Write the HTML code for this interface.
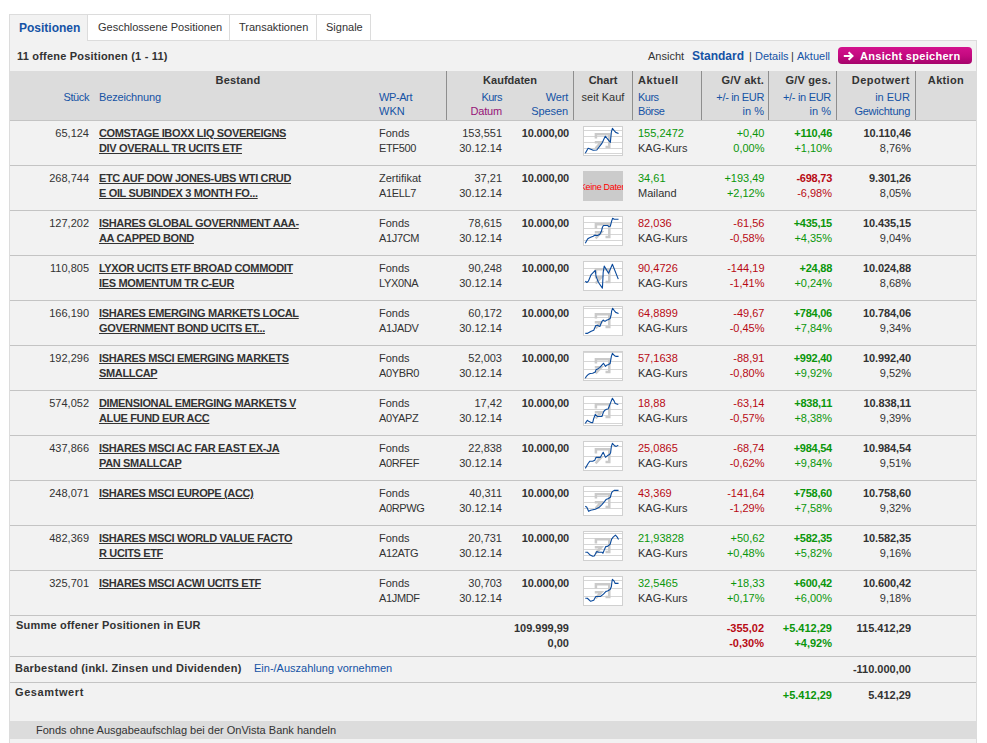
<!DOCTYPE html>
<html><head><meta charset="utf-8"><style>
html,body{margin:0;padding:0;background:#fff;width:987px;height:743px;overflow:hidden;position:relative}
body{font-family:"Liberation Sans",sans-serif;font-size:11px;color:#333}
.t{position:absolute;white-space:nowrap;line-height:15px}
.nm{font-weight:bold;text-decoration:underline;letter-spacing:-0.35px}
</style></head><body>
<div style="position:absolute;left:9px;top:14px;width:79px;height:27px;background:#f2f2f2;border:1px solid #dcdcdc;border-bottom:none;box-sizing:border-box"></div>
<div style="position:absolute;left:88px;top:14px;width:142px;height:27px;background:#fff;border:1px solid #dcdcdc;border-left:none;box-sizing:border-box"></div>
<div style="position:absolute;left:230px;top:14px;width:87px;height:27px;background:#fff;border:1px solid #dcdcdc;border-left:none;box-sizing:border-box"></div>
<div style="position:absolute;left:317px;top:14px;width:54px;height:27px;background:#fff;border:1px solid #dcdcdc;border-left:none;box-sizing:border-box"></div>
<div style="position:absolute;left:88px;top:40px;width:889px;height:1px;background:#dcdcdc"></div>
<div style="position:absolute;left:9px;top:41px;width:968px;height:702px;background:#f2f2f2;border-left:1px solid #dcdcdc;border-right:1px solid #dcdcdc;box-sizing:border-box"></div>
<div style="position:absolute;left:10px;top:40px;width:77px;height:2px;background:#f2f2f2"></div>
<div class="t" style="left:19px;top:21px;color:#1553a5;font-weight:bold;font-size:12px">Positionen</div>
<div class="t" style="left:98px;top:20px">Geschlossene Positionen</div>
<div class="t" style="left:239px;top:20px">Transaktionen</div>
<div class="t" style="left:326px;top:20px">Signale</div>
<div class="t" style="left:17px;top:49px;font-weight:bold;letter-spacing:0.2px">11 offene Positionen (1 - 11)</div>
<div class="t" style="left:648px;top:49px">Ansicht</div>
<div class="t" style="left:692px;top:49px;color:#1553a5;font-weight:bold;font-size:12px">Standard</div>
<div class="t" style="left:749px;top:49px">|</div>
<div class="t" style="left:755px;top:49px;color:#1553a5">Details</div>
<div class="t" style="left:791px;top:49px">|</div>
<div class="t" style="left:797px;top:49px;color:#1553a5">Aktuell</div>
<div style="position:absolute;left:838px;top:47px;width:134px;height:17px;border-radius:4px;background:linear-gradient(#d3128d 0%,#c40a80 50%,#a5046b 100%);"></div>
<svg style="position:absolute;left:843px;top:51px" width="12" height="10" viewBox="0 0 12 10"><path d="M0.8 5H9.5M5.6 1.2L9.5 5L5.6 8.8" stroke="#fff" stroke-width="2" fill="none"/></svg>
<div class="t" style="left:860px;top:49px;color:#fff;font-weight:bold;letter-spacing:0.3px">Ansicht speichern</div>
<div style="position:absolute;left:10px;top:71px;width:966px;height:49px;background:#dcdcdc"></div>
<div style="position:absolute;left:10px;top:120px;width:966px;height:1px;background:#c4c4c4"></div>
<div style="position:absolute;left:446px;top:71px;width:1px;height:49px;background:#8e8e8e"></div>
<div style="position:absolute;left:573px;top:71px;width:1px;height:49px;background:#8e8e8e"></div>
<div style="position:absolute;left:632px;top:71px;width:1px;height:49px;background:#8e8e8e"></div>
<div style="position:absolute;left:701px;top:71px;width:1px;height:49px;background:#8e8e8e"></div>
<div style="position:absolute;left:768px;top:71px;width:1px;height:49px;background:#8e8e8e"></div>
<div style="position:absolute;left:836px;top:71px;width:1px;height:49px;background:#8e8e8e"></div>
<div style="position:absolute;left:915px;top:71px;width:1px;height:49px;background:#8e8e8e"></div>
<div class="t" style="left:238px;width:0;text-align:center;top:73px;font-weight:bold;letter-spacing:0.24px"><span style="position:relative;display:inline-block;transform:translateX(-50%)">Bestand</span></div>
<div class="t" style="right:898px;top:90px;color:#1553a5;letter-spacing:-0.4px">Stück</div>
<div class="t" style="left:99px;top:90px;color:#1553a5;letter-spacing:-0.15px">Bezeichnung</div>
<div class="t" style="left:379px;top:90px;color:#1553a5;letter-spacing:-0.4px">WP-Art</div>
<div class="t" style="left:379px;top:104px;color:#1553a5">WKN</div>
<div class="t" style="left:510px;width:0;text-align:center;top:73px;font-weight:bold"><span style="position:relative;display:inline-block;transform:translateX(-50%)">Kaufdaten</span></div>
<div class="t" style="right:485px;top:90px;color:#1553a5;letter-spacing:-0.5px">Kurs</div>
<div class="t" style="right:485px;top:104px;color:#961478;letter-spacing:-0.2px">Datum</div>
<div class="t" style="right:419px;top:90px;color:#1553a5;letter-spacing:-0.2px">Wert</div>
<div class="t" style="right:419px;top:104px;color:#1553a5;letter-spacing:-0.1px">Spesen</div>
<div class="t" style="left:603px;width:0;text-align:center;top:73px;font-weight:bold"><span style="position:relative;display:inline-block;transform:translateX(-50%)">Chart</span></div>
<div class="t" style="left:603px;width:0;text-align:center;top:90px"><span style="position:relative;display:inline-block;transform:translateX(-50%)">seit Kauf</span></div>
<div class="t" style="left:638px;top:73px;font-weight:bold;letter-spacing:0.57px">Aktuell</div>
<div class="t" style="left:638px;top:90px;color:#1553a5;letter-spacing:-0.5px">Kurs</div>
<div class="t" style="left:638px;top:104px;color:#1553a5;letter-spacing:-0.45px">Börse</div>
<div class="t" style="right:223px;top:73px;font-weight:bold;letter-spacing:0.19px">G/V akt.</div>
<div class="t" style="right:223px;top:90px;color:#1553a5;letter-spacing:-0.34px">+/- in EUR</div>
<div class="t" style="right:223px;top:104px;color:#1553a5">in %</div>
<div class="t" style="right:156px;top:73px;font-weight:bold;letter-spacing:0.2px">G/V ges.</div>
<div class="t" style="right:156px;top:90px;color:#1553a5;letter-spacing:-0.3px">+/- in EUR</div>
<div class="t" style="right:156px;top:104px;color:#1553a5">in %</div>
<div class="t" style="right:77px;top:73px;font-weight:bold;letter-spacing:0.49px">Depotwert</div>
<div class="t" style="right:77px;top:90px;color:#1553a5">in EUR</div>
<div class="t" style="right:77px;top:104px;color:#1553a5;letter-spacing:-0.25px">Gewichtung</div>
<div class="t" style="left:946px;width:0;text-align:center;top:73px;font-weight:bold;letter-spacing:0.35px"><span style="position:relative;display:inline-block;transform:translateX(-50%)">Aktion</span></div>
<div class="t" style="right:898px;top:126px">65,124</div>
<div class="t nm" style="left:99px;top:126px">COMSTAGE IBOXX LIQ SOVEREIGNS</div>
<div class="t nm" style="left:99px;top:141px">DIV OVERALL TR UCITS ETF</div>
<div class="t" style="left:379px;top:126px">Fonds</div>
<div class="t" style="left:379px;top:141px;letter-spacing:-0.35px">ETF500</div>
<div class="t" style="right:485px;top:126px">153,551</div>
<div class="t" style="right:485px;top:141px">30.12.14</div>
<div class="t" style="right:418px;top:126px;font-weight:bold;letter-spacing:-0.2px">10.000,00</div>
<svg style="position:absolute;left:583px;top:126px" width="40" height="30" viewBox="0 0 40 30"><rect x="0.5" y="0.5" width="39" height="29" fill="#fff" stroke="#d0d0d0"/><path d="M1 4.5H39" stroke="#d6d6d6" stroke-width="1"/><path d="M1 10.5H39" stroke="#d6d6d6" stroke-width="1"/><path d="M1 16.5H39" stroke="#d6d6d6" stroke-width="1"/><path d="M1 22.5H39" stroke="#d6d6d6" stroke-width="1"/><path d="M1 27.5H39" stroke="#d6d6d6" stroke-width="1"/><path d="M12.9 12.5V8.2H26.3V22.3M22.5 21.1H27.5M11.8 16.2H18.3L12.6 22.3" stroke="#cacaca" stroke-width="2.5" fill="none"/><path d="M2.3 27.35 L5.11 22.24 L7.16 23.01 L10.22 24.28 L13.8 24.03 L18.92 17.38 L22.24 10.22 L27.35 16.36 L28.37 6.13 L29.4 2.3 L31.19 4.6 L32.72 6.39 L35.53 7.41" stroke="#0a4a9c" stroke-width="1.1" fill="none" stroke-linejoin="round"/></svg>
<div class="t" style="left:638px;top:126px;color:#0a960a">155,2472</div>
<div class="t" style="left:638px;top:141px">KAG-Kurs</div>
<div class="t" style="right:222.5px;top:126px;color:#0a960a">+0,40</div>
<div class="t" style="right:222.5px;top:141px;color:#0a960a">0,00%</div>
<div class="t" style="right:155px;top:126px;color:#0a960a;font-weight:bold;letter-spacing:-0.25px">+110,46</div>
<div class="t" style="right:155px;top:141px;color:#0a960a">+1,10%</div>
<div class="t" style="right:76px;top:126px;font-weight:bold;letter-spacing:-0.1px">10.110,46</div>
<div class="t" style="right:76px;top:141px">8,76%</div>
<div style="position:absolute;left:10px;top:165px;width:966px;height:1px;background:#c4c4c4"></div>
<div class="t" style="right:898px;top:171px">268,744</div>
<div class="t nm" style="left:99px;top:171px">ETC AUF DOW JONES-UBS WTI CRUD</div>
<div class="t nm" style="left:99px;top:186px">E OIL SUBINDEX 3 MONTH FO...</div>
<div class="t" style="left:379px;top:171px">Zertifikat</div>
<div class="t" style="left:379px;top:186px;letter-spacing:-0.35px">A1ELL7</div>
<div class="t" style="right:485px;top:171px">37,21</div>
<div class="t" style="right:485px;top:186px">30.12.14</div>
<div class="t" style="right:418px;top:171px;font-weight:bold;letter-spacing:-0.2px">10.000,00</div>
<div style="position:absolute;left:583px;top:171px;width:40px;height:30px;background:#cbcbcb;overflow:hidden"><div style="position:absolute;left:-10px;top:9.5px;width:60px;text-align:center;font-size:9px;line-height:12px;color:#f00;white-space:nowrap;letter-spacing:-0.3px;transform:scaleY(1.08)">Keine Daten</div></div>
<div class="t" style="left:638px;top:171px;color:#0a960a">34,61</div>
<div class="t" style="left:638px;top:186px">Mailand</div>
<div class="t" style="right:222.5px;top:171px;color:#0a960a">+193,49</div>
<div class="t" style="right:222.5px;top:186px;color:#0a960a">+2,12%</div>
<div class="t" style="right:155px;top:171px;color:#b80a14;font-weight:bold;letter-spacing:-0.25px">-698,73</div>
<div class="t" style="right:155px;top:186px;color:#b80a14">-6,98%</div>
<div class="t" style="right:76px;top:171px;font-weight:bold;letter-spacing:-0.1px">9.301,26</div>
<div class="t" style="right:76px;top:186px">8,05%</div>
<div style="position:absolute;left:10px;top:210px;width:966px;height:1px;background:#c4c4c4"></div>
<div class="t" style="right:898px;top:216px">127,202</div>
<div class="t nm" style="left:99px;top:216px">ISHARES GLOBAL GOVERNMENT AAA-</div>
<div class="t nm" style="left:99px;top:231px">AA CAPPED BOND</div>
<div class="t" style="left:379px;top:216px">Fonds</div>
<div class="t" style="left:379px;top:231px;letter-spacing:-0.35px">A1J7CM</div>
<div class="t" style="right:485px;top:216px">78,615</div>
<div class="t" style="right:485px;top:231px">30.12.14</div>
<div class="t" style="right:418px;top:216px;font-weight:bold;letter-spacing:-0.2px">10.000,00</div>
<svg style="position:absolute;left:583px;top:216px" width="40" height="30" viewBox="0 0 40 30"><rect x="0.5" y="0.5" width="39" height="29" fill="#fff" stroke="#d0d0d0"/><path d="M1 6.5H39" stroke="#d6d6d6" stroke-width="1"/><path d="M1 12.5H39" stroke="#d6d6d6" stroke-width="1"/><path d="M1 18.5H39" stroke="#d6d6d6" stroke-width="1"/><path d="M1 24.5H39" stroke="#d6d6d6" stroke-width="1"/><path d="M12.9 12.5V8.2H26.3V22.3M22.5 21.1H27.5M11.8 16.2H18.3L12.6 22.3" stroke="#cacaca" stroke-width="2.5" fill="none"/><path d="M2.3 27.35 L4.6 23.01 L5.62 22.24 L7.67 21.22 L10.22 20.19 L11.76 19.17 L14.57 19.43 L16.87 18.15 L18.4 15.34 L19.43 11.25 L20.45 9.46 L24.54 9.46 L25.56 10.48 L27.35 10.22 L28.63 5.11 L29.65 2.3 L31.19 3.32 L35.53 3.32" stroke="#0a4a9c" stroke-width="1.1" fill="none" stroke-linejoin="round"/></svg>
<div class="t" style="left:638px;top:216px;color:#b80a14">82,036</div>
<div class="t" style="left:638px;top:231px">KAG-Kurs</div>
<div class="t" style="right:222.5px;top:216px;color:#b80a14">-61,56</div>
<div class="t" style="right:222.5px;top:231px;color:#b80a14">-0,58%</div>
<div class="t" style="right:155px;top:216px;color:#0a960a;font-weight:bold;letter-spacing:-0.25px">+435,15</div>
<div class="t" style="right:155px;top:231px;color:#0a960a">+4,35%</div>
<div class="t" style="right:76px;top:216px;font-weight:bold;letter-spacing:-0.1px">10.435,15</div>
<div class="t" style="right:76px;top:231px">9,04%</div>
<div style="position:absolute;left:10px;top:255px;width:966px;height:1px;background:#c4c4c4"></div>
<div class="t" style="right:898px;top:261px">110,805</div>
<div class="t nm" style="left:99px;top:261px">LYXOR UCITS ETF BROAD COMMODIT</div>
<div class="t nm" style="left:99px;top:276px">IES MOMENTUM TR C-EUR</div>
<div class="t" style="left:379px;top:261px">Fonds</div>
<div class="t" style="left:379px;top:276px;letter-spacing:-0.35px">LYX0NA</div>
<div class="t" style="right:485px;top:261px">90,248</div>
<div class="t" style="right:485px;top:276px">30.12.14</div>
<div class="t" style="right:418px;top:261px;font-weight:bold;letter-spacing:-0.2px">10.000,00</div>
<svg style="position:absolute;left:583px;top:261px" width="40" height="30" viewBox="0 0 40 30"><rect x="0.5" y="0.5" width="39" height="29" fill="#fff" stroke="#d0d0d0"/><path d="M1 7.5H39" stroke="#d6d6d6" stroke-width="1"/><path d="M1 14.5H39" stroke="#d6d6d6" stroke-width="1"/><path d="M1 21.5H39" stroke="#d6d6d6" stroke-width="1"/><path d="M12.9 12.5V8.2H26.3V22.3M22.5 21.1H27.5M11.8 16.2H18.3L12.6 22.3" stroke="#cacaca" stroke-width="2.5" fill="none"/><path d="M2.3 20.19 L3.83 21.47 L5.37 20.19 L8.18 13.55 L12.27 9.46 L13.04 15.08 L15.34 21.22 L19.43 27.1 L20.19 11.25 L21.22 5.11 L25.56 12.27 L29.4 3.32 L35.28 18.15" stroke="#0a4a9c" stroke-width="1.1" fill="none" stroke-linejoin="round"/></svg>
<div class="t" style="left:638px;top:261px;color:#b80a14">90,4726</div>
<div class="t" style="left:638px;top:276px">KAG-Kurs</div>
<div class="t" style="right:222.5px;top:261px;color:#b80a14">-144,19</div>
<div class="t" style="right:222.5px;top:276px;color:#b80a14">-1,41%</div>
<div class="t" style="right:155px;top:261px;color:#0a960a;font-weight:bold;letter-spacing:-0.25px">+24,88</div>
<div class="t" style="right:155px;top:276px;color:#0a960a">+0,24%</div>
<div class="t" style="right:76px;top:261px;font-weight:bold;letter-spacing:-0.1px">10.024,88</div>
<div class="t" style="right:76px;top:276px">8,68%</div>
<div style="position:absolute;left:10px;top:300px;width:966px;height:1px;background:#c4c4c4"></div>
<div class="t" style="right:898px;top:306px">166,190</div>
<div class="t nm" style="left:99px;top:306px">ISHARES EMERGING MARKETS LOCAL</div>
<div class="t nm" style="left:99px;top:321px">GOVERNMENT BOND UCITS ET...</div>
<div class="t" style="left:379px;top:306px">Fonds</div>
<div class="t" style="left:379px;top:321px;letter-spacing:-0.35px">A1JADV</div>
<div class="t" style="right:485px;top:306px">60,172</div>
<div class="t" style="right:485px;top:321px">30.12.14</div>
<div class="t" style="right:418px;top:306px;font-weight:bold;letter-spacing:-0.2px">10.000,00</div>
<svg style="position:absolute;left:583px;top:306px" width="40" height="30" viewBox="0 0 40 30"><rect x="0.5" y="0.5" width="39" height="29" fill="#fff" stroke="#d0d0d0"/><path d="M1 2.5H39" stroke="#d6d6d6" stroke-width="1"/><path d="M1 11.5H39" stroke="#d6d6d6" stroke-width="1"/><path d="M1 19.5H39" stroke="#d6d6d6" stroke-width="1"/><path d="M1 29.5H39" stroke="#d6d6d6" stroke-width="1"/><path d="M12.9 12.5V8.2H26.3V22.3M22.5 21.1H27.5M11.8 16.2H18.3L12.6 22.3" stroke="#cacaca" stroke-width="2.5" fill="none"/><path d="M2.3 27.35 L4.6 27.35 L8.18 25.31 L10.74 24.28 L12.78 19.43 L14.31 19.17 L16.87 20.45 L18.92 15.34 L20.19 14.06 L21.98 15.34 L23.52 14.31 L25.56 13.55 L27.1 12.53 L28.12 9.2 L28.63 5.11 L29.65 2.3 L31.44 4.86 L32.72 6.39 L35.53 7.41" stroke="#0a4a9c" stroke-width="1.1" fill="none" stroke-linejoin="round"/></svg>
<div class="t" style="left:638px;top:306px;color:#b80a14">64,8899</div>
<div class="t" style="left:638px;top:321px">KAG-Kurs</div>
<div class="t" style="right:222.5px;top:306px;color:#b80a14">-49,67</div>
<div class="t" style="right:222.5px;top:321px;color:#b80a14">-0,45%</div>
<div class="t" style="right:155px;top:306px;color:#0a960a;font-weight:bold;letter-spacing:-0.25px">+784,06</div>
<div class="t" style="right:155px;top:321px;color:#0a960a">+7,84%</div>
<div class="t" style="right:76px;top:306px;font-weight:bold;letter-spacing:-0.1px">10.784,06</div>
<div class="t" style="right:76px;top:321px">9,34%</div>
<div style="position:absolute;left:10px;top:345px;width:966px;height:1px;background:#c4c4c4"></div>
<div class="t" style="right:898px;top:351px">192,296</div>
<div class="t nm" style="left:99px;top:351px">ISHARES MSCI EMERGING MARKETS</div>
<div class="t nm" style="left:99px;top:366px">SMALLCAP</div>
<div class="t" style="left:379px;top:351px">Fonds</div>
<div class="t" style="left:379px;top:366px;letter-spacing:-0.35px">A0YBR0</div>
<div class="t" style="right:485px;top:351px">52,003</div>
<div class="t" style="right:485px;top:366px">30.12.14</div>
<div class="t" style="right:418px;top:351px;font-weight:bold;letter-spacing:-0.2px">10.000,00</div>
<svg style="position:absolute;left:583px;top:351px" width="40" height="30" viewBox="0 0 40 30"><rect x="0.5" y="0.5" width="39" height="29" fill="#fff" stroke="#d0d0d0"/><path d="M1 1.5H39" stroke="#d6d6d6" stroke-width="1"/><path d="M1 10.5H39" stroke="#d6d6d6" stroke-width="1"/><path d="M1 18.5H39" stroke="#d6d6d6" stroke-width="1"/><path d="M1 27.5H39" stroke="#d6d6d6" stroke-width="1"/><path d="M12.9 12.5V8.2H26.3V22.3M22.5 21.1H27.5M11.8 16.2H18.3L12.6 22.3" stroke="#cacaca" stroke-width="2.5" fill="none"/><path d="M2.3 27.35 L3.58 25.05 L5.11 23.52 L7.16 22.49 L9.71 22.24 L12.27 20.96 L13.04 18.66 L15.08 17.64 L16.87 16.36 L18.4 14.57 L20.45 12.27 L22.49 15.34 L23.52 14.31 L25.56 13.55 L27.1 12.53 L28.37 5.37 L29.4 2.3 L31.7 4.86 L32.72 5.37 L35.53 5.37" stroke="#0a4a9c" stroke-width="1.1" fill="none" stroke-linejoin="round"/></svg>
<div class="t" style="left:638px;top:351px;color:#b80a14">57,1638</div>
<div class="t" style="left:638px;top:366px">KAG-Kurs</div>
<div class="t" style="right:222.5px;top:351px;color:#b80a14">-88,91</div>
<div class="t" style="right:222.5px;top:366px;color:#b80a14">-0,80%</div>
<div class="t" style="right:155px;top:351px;color:#0a960a;font-weight:bold;letter-spacing:-0.25px">+992,40</div>
<div class="t" style="right:155px;top:366px;color:#0a960a">+9,92%</div>
<div class="t" style="right:76px;top:351px;font-weight:bold;letter-spacing:-0.1px">10.992,40</div>
<div class="t" style="right:76px;top:366px">9,52%</div>
<div style="position:absolute;left:10px;top:390px;width:966px;height:1px;background:#c4c4c4"></div>
<div class="t" style="right:898px;top:396px">574,052</div>
<div class="t nm" style="left:99px;top:396px">DIMENSIONAL EMERGING MARKETS V</div>
<div class="t nm" style="left:99px;top:411px">ALUE FUND EUR ACC</div>
<div class="t" style="left:379px;top:396px">Fonds</div>
<div class="t" style="left:379px;top:411px;letter-spacing:-0.35px">A0YAPZ</div>
<div class="t" style="right:485px;top:396px">17,42</div>
<div class="t" style="right:485px;top:411px">30.12.14</div>
<div class="t" style="right:418px;top:396px;font-weight:bold;letter-spacing:-0.2px">10.000,00</div>
<svg style="position:absolute;left:583px;top:396px" width="40" height="30" viewBox="0 0 40 30"><rect x="0.5" y="0.5" width="39" height="29" fill="#fff" stroke="#d0d0d0"/><path d="M1 7.5H39" stroke="#d6d6d6" stroke-width="1"/><path d="M1 13.5H39" stroke="#d6d6d6" stroke-width="1"/><path d="M1 19.5H39" stroke="#d6d6d6" stroke-width="1"/><path d="M1 27.5H39" stroke="#d6d6d6" stroke-width="1"/><path d="M12.9 12.5V8.2H26.3V22.3M22.5 21.1H27.5M11.8 16.2H18.3L12.6 22.3" stroke="#cacaca" stroke-width="2.5" fill="none"/><path d="M2.3 27.35 L4.35 24.28 L5.62 25.31 L7.67 26.33 L9.71 26.58 L10.48 23.26 L12.27 18.4 L14.31 20.45 L18.92 20.45 L20.45 16.1 L21.47 14.57 L23.52 13.29 L25.05 13.04 L26.07 10.74 L27.61 6.65 L29.4 2.3 L31.19 5.11 L32.21 7.41 L35.28 8.44" stroke="#0a4a9c" stroke-width="1.1" fill="none" stroke-linejoin="round"/></svg>
<div class="t" style="left:638px;top:396px;color:#b80a14">18,88</div>
<div class="t" style="left:638px;top:411px">KAG-Kurs</div>
<div class="t" style="right:222.5px;top:396px;color:#b80a14">-63,14</div>
<div class="t" style="right:222.5px;top:411px;color:#b80a14">-0,57%</div>
<div class="t" style="right:155px;top:396px;color:#0a960a;font-weight:bold;letter-spacing:-0.25px">+838,11</div>
<div class="t" style="right:155px;top:411px;color:#0a960a">+8,38%</div>
<div class="t" style="right:76px;top:396px;font-weight:bold;letter-spacing:-0.1px">10.838,11</div>
<div class="t" style="right:76px;top:411px">9,39%</div>
<div style="position:absolute;left:10px;top:435px;width:966px;height:1px;background:#c4c4c4"></div>
<div class="t" style="right:898px;top:441px">437,866</div>
<div class="t nm" style="left:99px;top:441px">ISHARES MSCI AC FAR EAST EX-JA</div>
<div class="t nm" style="left:99px;top:456px">PAN SMALLCAP</div>
<div class="t" style="left:379px;top:441px">Fonds</div>
<div class="t" style="left:379px;top:456px;letter-spacing:-0.35px">A0RFEF</div>
<div class="t" style="right:485px;top:441px">22,838</div>
<div class="t" style="right:485px;top:456px">30.12.14</div>
<div class="t" style="right:418px;top:441px;font-weight:bold;letter-spacing:-0.2px">10.000,00</div>
<svg style="position:absolute;left:583px;top:441px" width="40" height="30" viewBox="0 0 40 30"><rect x="0.5" y="0.5" width="39" height="29" fill="#fff" stroke="#d0d0d0"/><path d="M1 5.5H39" stroke="#d6d6d6" stroke-width="1"/><path d="M1 15.5H39" stroke="#d6d6d6" stroke-width="1"/><path d="M1 25.5H39" stroke="#d6d6d6" stroke-width="1"/><path d="M12.9 12.5V8.2H26.3V22.3M22.5 21.1H27.5M11.8 16.2H18.3L12.6 22.3" stroke="#cacaca" stroke-width="2.5" fill="none"/><path d="M2.3 27.35 L5.11 22.49 L6.9 20.19 L9.71 20.19 L11.76 19.17 L13.04 16.36 L17.38 16.36 L18.92 13.55 L20.19 11.25 L22.49 16.36 L24.54 14.57 L26.58 13.55 L27.61 11.76 L28.37 5.37 L29.4 2.3 L31.7 4.86 L33.23 5.37 L35.28 4.35" stroke="#0a4a9c" stroke-width="1.1" fill="none" stroke-linejoin="round"/></svg>
<div class="t" style="left:638px;top:441px;color:#b80a14">25,0865</div>
<div class="t" style="left:638px;top:456px">KAG-Kurs</div>
<div class="t" style="right:222.5px;top:441px;color:#b80a14">-68,74</div>
<div class="t" style="right:222.5px;top:456px;color:#b80a14">-0,62%</div>
<div class="t" style="right:155px;top:441px;color:#0a960a;font-weight:bold;letter-spacing:-0.25px">+984,54</div>
<div class="t" style="right:155px;top:456px;color:#0a960a">+9,84%</div>
<div class="t" style="right:76px;top:441px;font-weight:bold;letter-spacing:-0.1px">10.984,54</div>
<div class="t" style="right:76px;top:456px">9,51%</div>
<div style="position:absolute;left:10px;top:480px;width:966px;height:1px;background:#c4c4c4"></div>
<div class="t" style="right:898px;top:486px">248,071</div>
<div class="t nm" style="left:99px;top:486px">ISHARES MSCI EUROPE (ACC)</div>
<div class="t" style="left:379px;top:486px">Fonds</div>
<div class="t" style="left:379px;top:501px;letter-spacing:-0.35px">A0RPWG</div>
<div class="t" style="right:485px;top:486px">40,311</div>
<div class="t" style="right:485px;top:501px">30.12.14</div>
<div class="t" style="right:418px;top:486px;font-weight:bold;letter-spacing:-0.2px">10.000,00</div>
<svg style="position:absolute;left:583px;top:486px" width="40" height="30" viewBox="0 0 40 30"><rect x="0.5" y="0.5" width="39" height="29" fill="#fff" stroke="#d0d0d0"/><path d="M1 5.5H39" stroke="#d6d6d6" stroke-width="1"/><path d="M1 10.5H39" stroke="#d6d6d6" stroke-width="1"/><path d="M1 16.5H39" stroke="#d6d6d6" stroke-width="1"/><path d="M1 22.5H39" stroke="#d6d6d6" stroke-width="1"/><path d="M12.9 12.5V8.2H26.3V22.3M22.5 21.1H27.5M11.8 16.2H18.3L12.6 22.3" stroke="#cacaca" stroke-width="2.5" fill="none"/><path d="M2.3 20.19 L3.83 21.22 L5.62 25.31 L7.67 24.28 L12.27 23.26 L14.31 22.24 L16.36 21.22 L18.92 18.66 L21.47 15.59 L23.01 13.55 L25.56 12.53 L27.35 11.25 L28.63 6.65 L29.65 5.37 L31.19 4.35 L35.53 4.35" stroke="#0a4a9c" stroke-width="1.1" fill="none" stroke-linejoin="round"/></svg>
<div class="t" style="left:638px;top:486px;color:#b80a14">43,369</div>
<div class="t" style="left:638px;top:501px">KAG-Kurs</div>
<div class="t" style="right:222.5px;top:486px;color:#b80a14">-141,64</div>
<div class="t" style="right:222.5px;top:501px;color:#b80a14">-1,29%</div>
<div class="t" style="right:155px;top:486px;color:#0a960a;font-weight:bold;letter-spacing:-0.25px">+758,60</div>
<div class="t" style="right:155px;top:501px;color:#0a960a">+7,58%</div>
<div class="t" style="right:76px;top:486px;font-weight:bold;letter-spacing:-0.1px">10.758,60</div>
<div class="t" style="right:76px;top:501px">9,32%</div>
<div style="position:absolute;left:10px;top:525px;width:966px;height:1px;background:#c4c4c4"></div>
<div class="t" style="right:898px;top:531px">482,369</div>
<div class="t nm" style="left:99px;top:531px">ISHARES MSCI WORLD VALUE FACTO</div>
<div class="t nm" style="left:99px;top:546px">R UCITS ETF</div>
<div class="t" style="left:379px;top:531px">Fonds</div>
<div class="t" style="left:379px;top:546px;letter-spacing:-0.35px">A12ATG</div>
<div class="t" style="right:485px;top:531px">20,731</div>
<div class="t" style="right:485px;top:546px">30.12.14</div>
<div class="t" style="right:418px;top:531px;font-weight:bold;letter-spacing:-0.2px">10.000,00</div>
<svg style="position:absolute;left:583px;top:531px" width="40" height="30" viewBox="0 0 40 30"><rect x="0.5" y="0.5" width="39" height="29" fill="#fff" stroke="#d0d0d0"/><path d="M1 2.5H39" stroke="#d6d6d6" stroke-width="1"/><path d="M1 7.5H39" stroke="#d6d6d6" stroke-width="1"/><path d="M1 13.5H39" stroke="#d6d6d6" stroke-width="1"/><path d="M1 18.5H39" stroke="#d6d6d6" stroke-width="1"/><path d="M1 24.5H39" stroke="#d6d6d6" stroke-width="1"/><path d="M12.9 12.5V8.2H26.3V22.3M22.5 21.1H27.5M11.8 16.2H18.3L12.6 22.3" stroke="#cacaca" stroke-width="2.5" fill="none"/><path d="M2.3 21.22 L4.35 21.22 L7.16 24.03 L9.71 25.31 L11.25 25.05 L13.8 20.45 L15.34 21.22 L18.92 21.22 L19.94 22.24 L21.47 18.4 L22.75 15.59 L24.54 15.34 L27.1 13.29 L28.63 8.18 L30.16 6.13 L32.46 4.09 L34.25 6.13 L35.53 8.44" stroke="#0a4a9c" stroke-width="1.1" fill="none" stroke-linejoin="round"/></svg>
<div class="t" style="left:638px;top:531px;color:#0a960a">21,93828</div>
<div class="t" style="left:638px;top:546px">KAG-Kurs</div>
<div class="t" style="right:222.5px;top:531px;color:#0a960a">+50,62</div>
<div class="t" style="right:222.5px;top:546px;color:#0a960a">+0,48%</div>
<div class="t" style="right:155px;top:531px;color:#0a960a;font-weight:bold;letter-spacing:-0.25px">+582,35</div>
<div class="t" style="right:155px;top:546px;color:#0a960a">+5,82%</div>
<div class="t" style="right:76px;top:531px;font-weight:bold;letter-spacing:-0.1px">10.582,35</div>
<div class="t" style="right:76px;top:546px">9,16%</div>
<div style="position:absolute;left:10px;top:570px;width:966px;height:1px;background:#c4c4c4"></div>
<div class="t" style="right:898px;top:576px">325,701</div>
<div class="t nm" style="left:99px;top:576px">ISHARES MSCI ACWI UCITS ETF</div>
<div class="t" style="left:379px;top:576px">Fonds</div>
<div class="t" style="left:379px;top:591px;letter-spacing:-0.35px">A1JMDF</div>
<div class="t" style="right:485px;top:576px">30,703</div>
<div class="t" style="right:485px;top:591px">30.12.14</div>
<div class="t" style="right:418px;top:576px;font-weight:bold;letter-spacing:-0.2px">10.000,00</div>
<svg style="position:absolute;left:583px;top:576px" width="40" height="30" viewBox="0 0 40 30"><rect x="0.5" y="0.5" width="39" height="29" fill="#fff" stroke="#d0d0d0"/><path d="M1 4.5H39" stroke="#d6d6d6" stroke-width="1"/><path d="M1 12.5H39" stroke="#d6d6d6" stroke-width="1"/><path d="M1 20.5H39" stroke="#d6d6d6" stroke-width="1"/><path d="M12.9 12.5V8.2H26.3V22.3M22.5 21.1H27.5M11.8 16.2H18.3L12.6 22.3" stroke="#cacaca" stroke-width="2.5" fill="none"/><path d="M2.3 22.24 L4.35 22.24 L7.67 25.31 L10.74 24.28 L12.78 20.45 L17.38 20.45 L20.45 18.15 L23.01 15.34 L24.54 15.08 L27.1 13.55 L28.37 10.74 L28.89 6.13 L29.4 3.32 L30.93 4.86 L32.21 7.41 L35.53 7.41" stroke="#0a4a9c" stroke-width="1.1" fill="none" stroke-linejoin="round"/></svg>
<div class="t" style="left:638px;top:576px;color:#0a960a">32,5465</div>
<div class="t" style="left:638px;top:591px">KAG-Kurs</div>
<div class="t" style="right:222.5px;top:576px;color:#0a960a">+18,33</div>
<div class="t" style="right:222.5px;top:591px;color:#0a960a">+0,17%</div>
<div class="t" style="right:155px;top:576px;color:#0a960a;font-weight:bold;letter-spacing:-0.25px">+600,42</div>
<div class="t" style="right:155px;top:591px;color:#0a960a">+6,00%</div>
<div class="t" style="right:76px;top:576px;font-weight:bold;letter-spacing:-0.1px">10.600,42</div>
<div class="t" style="right:76px;top:591px">9,18%</div>
<div style="position:absolute;left:10px;top:615px;width:966px;height:1px;background:#c4c4c4"></div>
<div class="t" style="left:16px;top:618px;font-weight:bold;letter-spacing:0.2px">Summe offener Positionen in EUR</div>
<div class="t" style="right:418px;top:621px;font-weight:bold">109.999,99</div>
<div class="t" style="right:418px;top:636px;font-weight:bold">0,00</div>
<div class="t" style="right:223px;top:621px;color:#b80a14;font-weight:bold">-355,02</div>
<div class="t" style="right:223px;top:636px;color:#b80a14;font-weight:bold">-0,30%</div>
<div class="t" style="right:155px;top:621px;color:#0a960a;font-weight:bold">+5.412,29</div>
<div class="t" style="right:155px;top:636px;color:#0a960a;font-weight:bold">+4,92%</div>
<div class="t" style="right:76px;top:621px;font-weight:bold">115.412,29</div>
<div style="position:absolute;left:10px;top:656px;width:966px;height:1px;background:#c4c4c4"></div>
<div class="t" style="left:15px;top:661px;font-weight:bold;letter-spacing:0.24px">Barbestand (inkl. Zinsen und Dividenden)</div>
<div class="t" style="left:254px;top:661px;color:#1553a5">Ein-/Auszahlung vornehmen</div>
<div class="t" style="right:76px;top:662px;font-weight:bold">-110.000,00</div>
<div style="position:absolute;left:10px;top:682px;width:966px;height:1px;background:#c4c4c4"></div>
<div class="t" style="left:15px;top:685px;font-weight:bold;letter-spacing:0.6px">Gesamtwert</div>
<div class="t" style="right:155px;top:688px;color:#0a960a;font-weight:bold">+5.412,29</div>
<div class="t" style="right:76px;top:688px;font-weight:bold">5.412,29</div>
<div style="position:absolute;left:10px;top:721px;width:966px;height:18px;background:#dcdcdc"></div>
<div class="t" style="left:36px;top:723px">Fonds ohne Ausgabeaufschlag bei der OnVista Bank handeln</div>
</body></html>
